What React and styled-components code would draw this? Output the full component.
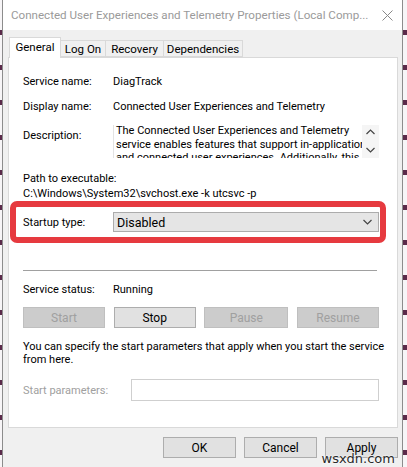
import React from "react"
import styled, { createGlobalStyle } from "styled-components"

const font = `Roboto, "Liberation Sans", sans-serif`

const GlobalStyle = createGlobalStyle`
  html, body {
    margin: 0;
    padding: 0;
    background: #f4f4f4;
  }
  body {
    font-family: ${font};
    font-size: 11px;
    color: #000;
  }
`

const Screen = styled.div`
  display: flex;
  width: 407px;
  height: 467px;
  overflow: hidden;
  position: relative;
`

const SideStrip = styled.div`
  width: ${(p) => p.$w}px;
  flex: none;
  background: repeating-linear-gradient(
    to bottom,
    #f7f5f7 0,
    #f7f5f7 30px,
    #5a2a4a 30px,
    #5a2a4a 35px
  );
`

const Window = styled.div`
  width: 401px;
  flex: none;
  display: flex;
  flex-direction: column;
  background: #f0f0f0;
  border-left: 1px solid #8c8c8c;
  border-right: 1px solid #8c8c8c;
  box-sizing: border-box;
`

const TitleBar = styled.div`
  height: 30px;
  flex: none;
  display: flex;
  align-items: center;
  justify-content: space-between;
  background: #fff;
  padding: 0 8px 0 8px;
`

const Title = styled.span`
  font-size: 11.6px;
  color: #9a9a9a;
  white-space: nowrap;
`

const CloseIcon = styled.svg`
  width: 11px;
  height: 11px;
  margin-right: 1px;
  flex: none;
`

const Body = styled.div`
  display: flex;
  flex-direction: column;
  padding: 7px 4px 0 5px;
`

const TabStrip = styled.div`
  display: flex;
  align-items: flex-end;
  height: 20px;
  padding-left: 1px;
  position: relative;
  z-index: 1;
`

const Tab = styled.div`
  height: ${(p) => (p.$active ? 21 : 17)}px;
  margin-bottom: ${(p) => (p.$active ? -1 : 0)}px;
  width: ${(p) => p.$w}px;
  box-sizing: border-box;
  display: flex;
  align-items: center;
  justify-content: center;
  background: ${(p) => (p.$active ? "#fff" : "#f0f0f0")};
  border: 1px solid #d9d9d9;
  border-bottom: ${(p) => (p.$active ? "none" : "1px solid #d9d9d9")};
  border-left: ${(p) => (p.$first || p.$active ? "1px solid #d9d9d9" : "none")};
  padding-bottom: ${(p) => (p.$active ? 2 : 0)}px;
  font-size: 11.5px;
  white-space: nowrap;
`

const Panel = styled.div`
  height: 371px;
  box-sizing: border-box;
  background: #fff;
  border: 1px solid #d9d9d9;
  padding: 0 18px 0 14px;
  display: flex;
  flex-direction: column;
`

const Row = styled.div`
  display: flex;
  align-items: ${(p) => (p.$top ? "flex-start" : "center")};
  height: ${(p) => p.$h || 16}px;
  margin-top: ${(p) => p.$mt || 0}px;
  flex: none;
`

const Label = styled.span`
  width: 90px;
  flex: none;
  padding-top: ${(p) => p.$pt || 0}px;
  color: ${(p) => (p.$disabled ? "#a0a0a0" : "#000")};
  white-space: nowrap;
`

const Value = styled.span`
  white-space: nowrap;
`

const DescBox = styled.div`
  flex: 1;
  height: 33px;
  display: flex;
  background: #fff;
  border-left: 1px solid #e3e3e3;
  overflow: hidden;
`

const DescText = styled.div`
  flex: 1;
  padding: 0 0 0 2px;
  line-height: 13.5px;
  margin-top: -1px;
  white-space: nowrap;
  overflow: hidden;
`

const ScrollCol = styled.div`
  width: 17px;
  flex: none;
  display: flex;
  flex-direction: column;
  align-items: center;
  justify-content: space-between;
  padding: 4px 0 5px;
  box-sizing: border-box;
  background: #f5f5f5;
`

const Highlight = styled.div`
  margin: 0 -7px 0 -13px;
  height: 42px;
  box-sizing: border-box;
  border: 6px solid #e63a3f;
  border-radius: 7px;
  padding: 0 1px 0 7px;
  display: flex;
  align-items: center;
  flex: none;
`

const Combo = styled.div`
  flex: 1;
  height: 20px;
  box-sizing: border-box;
  background: #e5e5e5;
  border: 1px solid #acacac;
  display: flex;
  align-items: center;
  justify-content: space-between;
  padding: 0 6px 0 3px;
  font-size: 12.5px;
`

const Separator = styled.div`
  height: 1px;
  flex: none;
  margin: 27px 2px 0 0;
  background: #a0a0a0;
`

const ButtonRow = styled.div`
  display: flex;
  justify-content: space-between;
  margin-top: ${(p) => p.$mt || 0}px;
  flex: none;
`

const Button = styled.div`
  width: ${(p) => p.$w || 82}px;
  height: 21px;
  box-sizing: border-box;
  display: flex;
  align-items: center;
  justify-content: center;
  background: ${(p) => (p.$disabled ? "#cccccc" : "#e1e1e1")};
  border: 1px solid ${(p) => (p.$disabled ? "#bfbfbf" : "#adadad")};
  color: ${(p) => (p.$disabled ? "#a0a0a0" : "#000")};
  font-size: 12px;
`

const Note = styled.p`
  margin: 12px 0 0;
  line-height: 13px;
  flex: none;
  white-space: nowrap;
`

const Input = styled.div`
  flex: 1;
  height: 22px;
  box-sizing: border-box;
  background: #fff;
  border: 1px solid #cfcfcf;
  margin-left: 18px;
`

const Footer = styled.div`
  display: flex;
  justify-content: flex-end;
  gap: 8px;
  margin-top: 9px;
`

const Watermark = styled.span`
  position: absolute;
  right: 12px;
  bottom: 1px;
  font-family: "DejaVu Sans", sans-serif;
  font-size: 13px;
  color: #2a2a2a;
  text-shadow: 0 0 2px #fff, 0 0 2px #fff;
`

const Chevron = ({ up }) => (
  <svg width="9" height="6" viewBox="0 0 9 6">
    <path
      d={up ? "M0.5 5 L4.5 1 L8.5 5" : "M0.5 1 L4.5 5 L8.5 1"}
      fill="none"
      stroke="#444"
      strokeWidth="1.2"
    />
  </svg>
)

const App = () => (
  <>
    <GlobalStyle />
    <Screen>
      <SideStrip $w={2} />
      <Window>
        <TitleBar>
          <Title>Connected User Experiences and Telemetry Properties (Local Comp...</Title>
          <CloseIcon viewBox="0 0 11 11">
            <path d="M0.5 0.5 L10.5 10.5 M10.5 0.5 L0.5 10.5" stroke="#888" strokeWidth="1" />
          </CloseIcon>
        </TitleBar>
        <Body>
          <TabStrip>
            <Tab $active $first $w={52}>General</Tab>
            <Tab $w={45}>Log On</Tab>
            <Tab $w={58}>Recovery</Tab>
            <Tab $w={79}>Dependencies</Tab>
          </TabStrip>
          <Panel>
            <Row $mt={15}>
              <Label>Service name:</Label>
              <Value>DiagTrack</Value>
            </Row>
            <Row $mt={9}>
              <Label>Display name:</Label>
              <Value>Connected User Experiences and Telemetry</Value>
            </Row>
            <Row $mt={11} $h={33} $top>
              <Label $pt={4}>Description:</Label>
              <DescBox>
                <DescText>
                  The Connected User Experiences and Telemetry
                  <br />
                  service enables features that support in-application
                  <br />
                  and connected user experiences. Additionally, this
                </DescText>
                <ScrollCol>
                  <Chevron up />
                  <Chevron />
                </ScrollCol>
              </DescBox>
            </Row>
            <Row $mt={12}>
              <Label>Path to executable:</Label>
            </Row>
            <Row $h={15}>
              <Value>C:\Windows\System32\svchost.exe -k utcsvc -p</Value>
            </Row>
            <Highlight>
              <Label>Startup type:</Label>
              <Combo>
                <span>Disabled</span>
                <Chevron />
              </Combo>
            </Highlight>
            <Separator />
            <Row $mt={10}>
              <Label>Service status:</Label>
              <Value>Running</Value>
            </Row>
            <ButtonRow $mt={10}>
              <Button $disabled>Start</Button>
              <Button>Stop</Button>
              <Button $disabled $w={84}>Pause</Button>
              <Button $disabled>Resume</Button>
            </ButtonRow>
            <Note>
              You can specify the start parameters that apply when you start the service
              <br />
              from here.
            </Note>
            <Row $mt={13} $h={22}>
              <Label $disabled>Start parameters:</Label>
              <Input />
            </Row>
          </Panel>
          <Footer>
            <Button $w={73}>OK</Button>
            <Button $w={73}>Cancel</Button>
            <Button $w={73}>Apply</Button>
          </Footer>
        </Body>
      </Window>
      <SideStrip $w={4} />
      <Watermark>wsxdn.com</Watermark>
    </Screen>
  </>
)

export default App
